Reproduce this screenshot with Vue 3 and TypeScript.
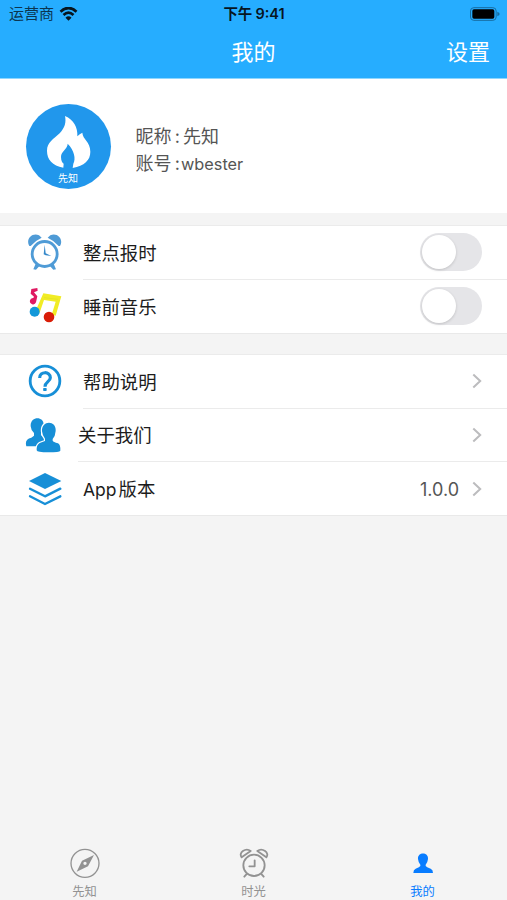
<script setup lang="ts">
import { reactive } from 'vue'

interface Reminder {
  id: 'alarm' | 'music'
  label: string
  on: boolean
}

interface LinkRow {
  id: 'help' | 'about' | 'version'
  label: string
  value?: string
}

const reminders = reactive<Reminder[]>([
  { id: 'alarm', label: '整点报时', on: false },
  { id: 'music', label: '睡前音乐', on: false },
])

const links: LinkRow[] = [
  { id: 'help', label: '帮助说明' },
  { id: 'about', label: '关于我们' },
  { id: 'version', label: 'App版本', value: '1.0.0' },
]
</script>

<template>
  <div class="screen">
    <header class="header">
      <div class="status">
        <div class="carrier">
          <span>运营商</span>
          <svg class="wifi" viewBox="0 0 54 42">
            <path d="M3 14Q27-8 51 14" />
            <path d="M12 24Q27 10 42 24" />
            <path class="solid" d="M18 32Q27 24 36 32L27 41Z" />
          </svg>
        </div>
        <div class="time">下午<span class="digits">9:41</span></div>
        <svg class="battery" viewBox="0 0 90 42">
          <rect class="shell" x="1.5" y="2" width="77" height="38" rx="10" />
          <rect x="7" y="7" width="66" height="28" rx="5" />
          <path class="cap" d="M82 14Q89 17 89 21T82 28Z" />
        </svg>
      </div>
      <nav class="navbar">
        <h1 class="title">我的</h1>
        <button class="settings">设置</button>
      </nav>
    </header>

    <section class="profile">
      <div class="avatar">
        <svg viewBox="47 41 255 255">
          <path
            d="M164 77C190 88 203 112 201 138Q208 130 216 127C217 147 240 154 240 184C240 210 222 226 187 233L189 220C197 205 192 180 172 160C172 176 152 182 152 200C152 212 157 219 160 220L159 232C126 226 110 208 110 182C110 155 130 147 148 129C164 112 168 96 164 77Z"
          />
        </svg>
        <span>先知</span>
      </div>
      <div class="info">
        <p>昵称<i>:</i>先知</p>
        <p>账号<i>:</i><span class="account">wbester</span></p>
      </div>
    </section>

    <section class="group">
      <div v-for="row in reminders" :key="row.id" class="row">
        <div class="icon">
          <svg v-if="row.id === 'alarm'" viewBox="75 87 120 114">
            <g fill="#4f9bd6">
              <path d="M88 123C76 104 96 81 117 91L125 98Q105 107 92 123Z" />
              <path d="M180 123C192 104 172 81 151 91L143 98Q163 107 176 123Z" />
              <path d="M107 176L100 193L108 194L119 182ZM161 176L168 193L160 194L149 182Z" />
            </g>
            <circle cx="134" cy="147" r="37.5" fill="#fff" stroke="#4f9bd6" stroke-width="8.5" />
            <path d="M134 119L131 148L137 151L154 153L137 145Z" fill="#3488ca" />
          </svg>
          <svg v-else viewBox="75 247 120 114">
            <path d="M130 266L184 275L167 333L155 330L167 291L132 286L119 324L107 318Z" fill="#f1ec25" />
            <path d="M132 279L174 284" stroke="#dfdf25" stroke-width="2" />
            <path
              d="M94 253L112 250L113 258L102 263L112 275L108 293A9.5 9.5 0 1 1 100 280L102 276L92 267Z"
              fill="#df1a62"
            />
            <circle cx="104" cy="321" r="15" fill="#1398d9" />
            <circle cx="147" cy="337" r="16" fill="#d91d07" />
          </svg>
        </div>
        <div class="body">
          <span class="label">{{ row.label }}</span>
          <button
            class="switch"
            :class="{ on: row.on }"
            role="switch"
            :aria-checked="row.on"
            @click="row.on = !row.on"
          >
            <span class="knob"></span>
          </button>
        </div>
      </div>
    </section>

    <section class="group links">
      <div v-for="row in links" :key="row.id" class="row" :class="row.id">
        <div class="icon">
          <svg v-if="row.id === 'help'" viewBox="75 51 120 114">
            <circle cx="135" cy="108" r="44.5" fill="none" stroke="#178fd7" stroke-width="8.5" />
            <path
              d="M119 99C119 78 151 78 151 98C151 110 135 110 135 125"
              fill="none"
              stroke="#178fd7"
              stroke-width="9.5"
            />
            <rect x="129.5" y="129" width="10.5" height="9" rx="2" fill="#178fd7" />
          </svg>
          <svg v-else-if="row.id === 'about'" viewBox="68 212 120 114">
            <path
              d="M91 243C89 212 131 211 130 239Q129 253 122 261V270L137 279V303H78Q72 281 93 277L101 271V263Q92 256 91 243Z"
              fill="#178fd7"
            />
            <path
              d="M125 258C122 224 169 223 166 257Q165 272 157 281V286Q159 290 173 294Q181 298 180 316Q178 321 144 321Q110 321 109 315Q108 299 118 293L134 287V280Q126 270 125 258Z"
              fill="#178fd7"
              stroke="#fff"
              stroke-width="7"
              paint-order="stroke"
            />
          </svg>
          <svg v-else viewBox="75 374 120 114">
            <path d="M135 383L184 407L135 431L87 407Z" fill="#178fd7" />
            <g fill="none" stroke="#178fd7" stroke-width="7" stroke-linecap="round" stroke-linejoin="round">
              <path d="M90 430L135 453L181 430M90 453L135 476L181 453" />
            </g>
          </svg>
        </div>
        <div class="body">
          <span class="label">
            <template v-if="row.id === 'version'"><span class="latin">App</span>版本</template>
            <template v-else>{{ row.label }}</template>
          </span>
          <span v-if="row.value" class="value">{{ row.value }}</span>
          <svg class="chevron" viewBox="0 0 10 16"><path d="M1.3 1.5L8.2 8L1.3 14.5" /></svg>
        </div>
      </div>
    </section>

    <footer class="tabs">
      <div class="tab">
        <svg viewBox="0 0 90 90">
          <circle cx="45" cy="46" r="42" fill="none" stroke="currentColor" stroke-width="4" />
          <path
            d="M72 21L54 55L20 71L36 38ZM45 41A5 5 0 1 0 45 51A5 5 0 1 0 45 41Z"
            fill="currentColor"
            fill-rule="evenodd"
          />
        </svg>
        <span>先知</span>
      </div>
      <div class="tab">
        <svg viewBox="0 0 90 90">
          <g fill="none" stroke="currentColor" stroke-width="5.5" stroke-linecap="round" stroke-linejoin="round">
            <circle cx="45" cy="52" r="32" />
            <path d="M47 37V55H31M22 79L16 86M68 79L74 86" />
            <path d="M8 28C-3 14 20-2 35 9ZM82 28C93 14 70-2 55 9Z" />
          </g>
        </svg>
        <span>时光</span>
      </div>
      <div class="tab active">
        <svg viewBox="0 0 90 90">
          <path
            d="M30 33C28 11 62 11 60 33Q59 43 53 50V54Q55 58 68 62Q75 65 75 75H16Q16 65 23 62Q35 58 37 54V50Q31 43 30 33Z"
            fill="currentColor"
          />
        </svg>
        <span>我的</span>
      </div>
    </footer>
  </div>
</template>

<style>
body {
  margin: 0;
  background: #f4f4f4;
}
</style>

<style scoped>
.screen {
  display: flex;
  flex-direction: column;
  height: 900px;
  overflow: hidden;
  background: #f4f4f4;
  color: #1c1c1c;
  font-family: Inter, 'Noto Sans CJK SC', sans-serif;
}
button {
  padding: 0;
  border: 0;
  background: none;
  color: inherit;
  font: inherit;
}
.header {
  flex: none;
  height: 78px;
  background: #26adff;
  border-bottom: 1px solid #8ed7ff;
}
.status {
  display: grid;
  grid-template-columns: 1fr auto 1fr;
  align-items: center;
  height: 27px;
  padding: 0 7px 0 9px;
  color: #07151f;
}
.carrier {
  display: flex;
  align-items: center;
  gap: 5px;
  font-size: 15px;
  line-height: 27px;
  color: #0b3550;
}
.wifi {
  width: 19px;
  height: 14px;
  fill: none;
  stroke: #07151f;
  stroke-width: 8;
}
.wifi .solid {
  fill: #07151f;
  stroke: none;
}
.time {
  margin-left: -1px;
  font-size: 14.5px;
  font-weight: 600;
  line-height: 27px;
}
.digits {
  margin-left: 3px;
  font-size: 14.5px;
}
.battery {
  justify-self: end;
  width: 30px;
  height: 14px;
}
.battery .shell {
  fill: none;
  stroke: #176da2;
  stroke-width: 3;
}
.battery .cap {
  fill: #176da2;
}
.navbar {
  display: grid;
  grid-template-columns: 1fr auto 1fr;
  align-items: center;
  height: 50px;
  padding: 0 17px;
  color: #fff;
}
.title {
  grid-column: 2;
  margin: 0;
  font-size: 22px;
  font-weight: 400;
  line-height: 50px;
}
.settings {
  justify-self: end;
  font-size: 22px;
  line-height: 50px;
}
.profile {
  display: flex;
  flex: none;
  align-items: center;
  gap: 25px;
  box-sizing: border-box;
  height: 134px;
  padding: 0 25.5px;
  background: #fff;
}
.avatar {
  display: grid;
  width: 85px;
  height: 85px;
  border-radius: 50%;
  background: #2197ec;
}
.avatar svg {
  grid-area: 1 / 1;
  width: 85px;
  height: 85px;
  fill: #fff;
}
.avatar span {
  grid-area: 1 / 1;
  align-self: end;
  justify-self: center;
  padding-bottom: 4px;
  color: #fff;
  font-size: 10px;
  line-height: 14px;
}
.info {
  padding-top: 8px;
}
.info p {
  margin: 0;
  color: #555;
  font-size: 18px;
  line-height: 27px;
  white-space: nowrap;
}
.info i {
  display: inline-block;
  width: 11.5px;
  font-style: normal;
  text-align: center;
}
.account {
  margin-left: -2px;
  font-size: 16.3px;
}
.group {
  flex: none;
  margin-top: 12px;
  border-top: 1px solid #ebebeb;
  border-bottom: 1px solid #e9e9e9;
  background: #fff;
}
.links {
  margin-top: 20px;
}
.row {
  display: flex;
  height: 53.5px;
}
.links .row:last-child {
  height: 53px;
}
.icon {
  display: flex;
  align-items: center;
  box-sizing: border-box;
  width: 83px;
  padding-left: 25px;
}
.icon svg {
  width: 40px;
  height: 38px;
}
.help .icon {
  padding-bottom: 1px;
}
.version .icon {
  padding-top: 1px;
}
.about .icon {
  width: 78px;
  padding-left: 22.7px;
}
.body {
  display: flex;
  flex: 1;
  align-items: center;
  box-sizing: border-box;
  padding-right: 25px;
  border-bottom: 1px solid #ebebeb;
}
.row:last-child .body {
  border-bottom: 0;
}
.label {
  flex: 1;
  padding-top: 1px;
  font-size: 18.4px;
  line-height: 30px;
}
.latin {
  margin-right: 2px;
  font-size: 17.5px;
}
.value {
  padding-top: 1px;
  margin-right: 13px;
  color: #555;
  font-size: 18px;
}
.switch {
  width: 62px;
  height: 38px;
  border-radius: 19px;
  background: #e5e5e8;
}
.switch.on {
  background: #34c759;
}
.knob {
  display: block;
  width: 34px;
  height: 34px;
  margin-left: 2px;
  border-radius: 50%;
  background: #fff;
  box-shadow: 0 1px 3px rgba(0, 0, 0, 0.16);
}
.switch.on .knob {
  margin-left: 26px;
}
.chevron {
  width: 10px;
  height: 16px;
  fill: none;
  stroke: #bcbcbe;
  stroke-width: 2;
}
.tabs {
  display: flex;
  flex: none;
  height: 52px;
  margin-top: auto;
  color: #929292;
}
.tab {
  display: flex;
  flex: 1;
  flex-direction: column;
  align-items: center;
  gap: 6px;
  font-size: 12.3px;
  line-height: 16px;
}
.tab svg {
  width: 30px;
  height: 30px;
}
.tab.active {
  color: #087cff;
}
</style>
